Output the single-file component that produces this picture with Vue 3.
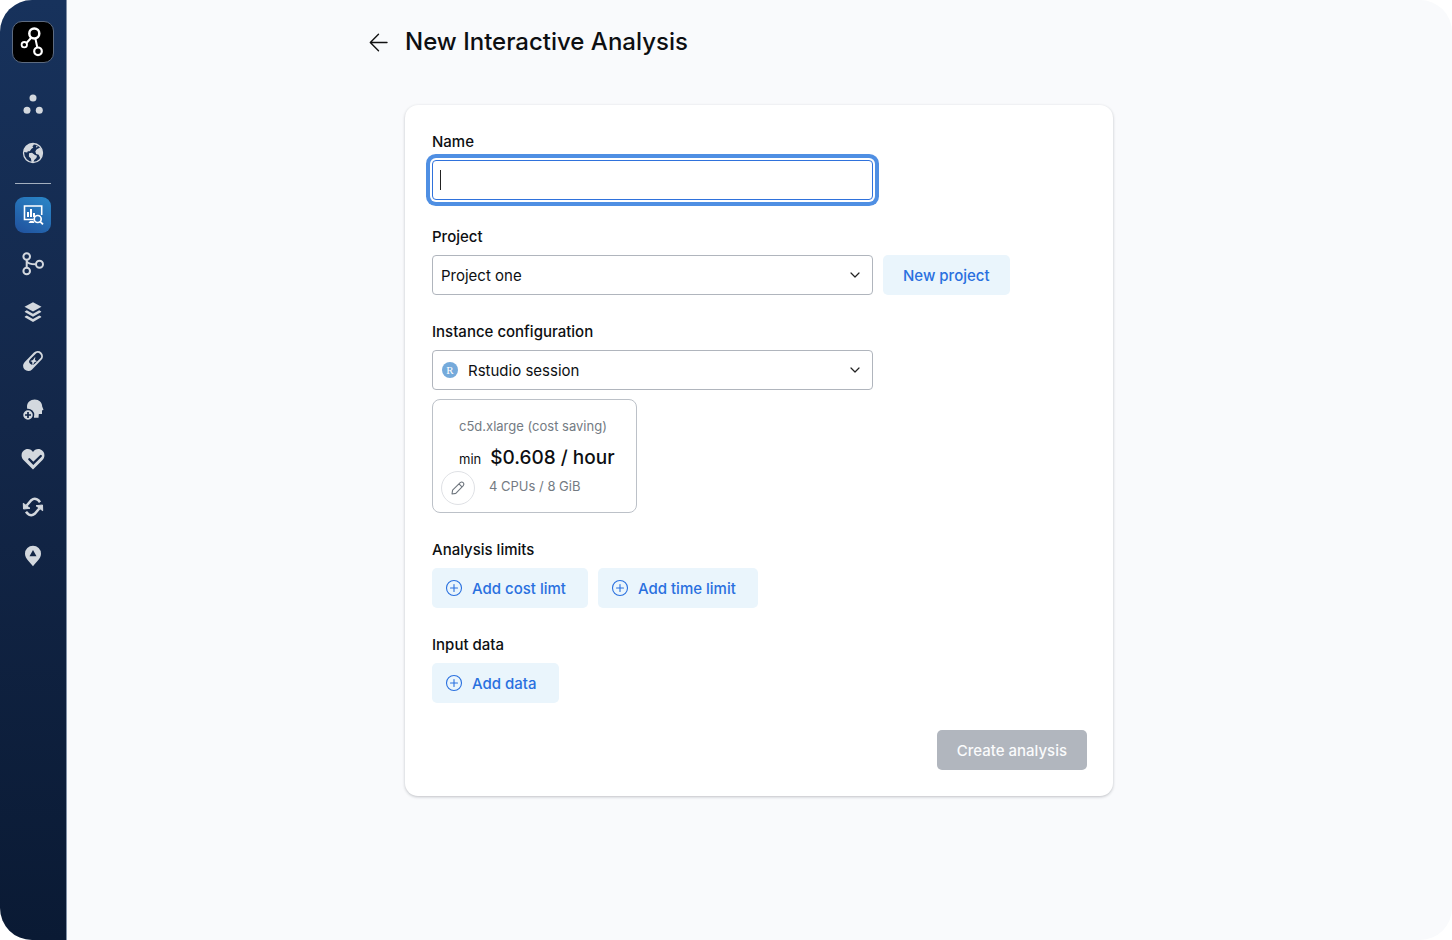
<script setup>
import { ref } from 'vue'

const name = ref('')
const project = ref('Project one')
const instance = ref('Rstudio session')
</script>

<template>
  <div class="app">
    <aside class="sidebar">
      <a class="logo" href="#" aria-label="Home">
        <svg width="40" height="40" viewBox="1 1 40 40" fill="none" stroke="#fff">
          <path d="M19 17 14.500 22M23.500 18 25.200 26" stroke-width="2" />
          <circle cx="22.300" cy="12.500" r="5" stroke-width="2.500" />
          <circle cx="12.300" cy="23.700" r="2.700" stroke-width="1.800" />
          <circle cx="26" cy="30.300" r="3.800" stroke-width="2.200" />
        </svg>
      </a>
      <nav class="nav" aria-label="Main">
        <a href="#" class="item" aria-label="Workspaces">
          <svg viewBox="0 0 24 24"><circle cx="12" cy="6" r="3.500" /><circle cx="6" cy="18.300" r="3.500" /><circle cx="18.300" cy="18.300" r="3.500" /></svg>
        </a>
        <a href="#" class="item" aria-label="Public data">
          <svg viewBox="0 0 24 24">
            <circle cx="12" cy="12" r="9.500" fill="none" stroke="currentColor" stroke-width="1.300" />
            <path d="M3 9C4 5 8 2.500 12 2.600l1 1.200-1.600 1.400.9 1.300-2 1.400-1.500 2.300-2 .1-.6 1.300L3 11z" />
            <path d="M8 12.300l3-.6 3 2.200 2 .8-.6 2.300-2.200 2-.8 2.600-1.700.2-.8-4.200-2-2z" />
            <path d="M15.500 8.500l3-1.800 2 1 1 3.300-.3 3.200-1.800 3.200-1.700-3.600-2.500-.7-.9-2.500zM15 4.500l1.800 1-1.300 1.200z" />
          </svg>
        </a>
      </nav>
      <hr class="divider" />
      <nav class="nav tools" aria-label="Tools">
        <a href="#" class="item active" aria-label="Interactive analysis" aria-current="page">
          <svg viewBox="0 0 24 24">
            <path d="M12.500 16.500H3.500V3H20.700v9" fill="none" stroke="currentColor" stroke-width="1.600" />
            <path d="M6 9h2v5H6zM9 6h2v8H9zM12 10h2v4h-2zM9 18h3.500l1 2H7.500z" />
            <circle cx="16.700" cy="16" r="3.500" fill="none" stroke="currentColor" stroke-width="1.700" />
            <path d="M19.200 18.600l2.800 2.800" stroke="currentColor" stroke-width="1.800" />
          </svg>
        </a>
        <a href="#" class="item" aria-label="Pipelines">
          <svg viewBox="0 0 24 24" class="line"><circle cx="5.700" cy="4.500" r="3.300" /><circle cx="5.700" cy="19" r="3.300" /><circle cx="18.500" cy="12.300" r="3.500" /><path d="M5.700 8v7.500M5.700 9c1 2.700 4 3.300 9 3.300" /></svg>
        </a>
        <a href="#" class="item" aria-label="Datasets">
          <svg viewBox="0 0 24 24"><path d="M12 2.200l8.500 4.600-8.500 4.700-8.500-4.700z" /><path d="M3.800 11.400l2-1.100 6.200 3.400 6.200-3.400 2 1.100v.7L12 16.800l-8.200-4.700zM3.800 16.600l2-1.100 6.200 3.400 6.200-3.400 2 1.100v.7L12 22l-8.200-4.700z" /></svg>
        </a>
        <a href="#" class="item" aria-label="Linked resources">
          <svg viewBox="0 0 24 24" stroke-linecap="round">
            <path d="M7.300 16.800l9.400-9.600" stroke="currentColor" stroke-width="10.500" />
            <path d="M11.500 12.500l5.300-5.300" stroke="#132749" stroke-width="6.500" />
            <path d="M14.300 7.800l-.3 3.200 2 1.300-2.600 1-1.900 3.400-.3-3.600-2-1.200 2.700-1z" />
          </svg>
        </a>
        <a href="#" class="item" aria-label="Cohorts">
          <svg viewBox="0 0 24 24">
            <path d="M13.700 1.500c4.400 0 7.500 3 7.500 7l1.300 3.200-1.500.8V16h-3.200l-.3 3.700H13l-.3-3.700C10.500 13 6 14 6 8.800c0-4.300 3.300-7.300 7.700-7.300z" />
            <circle cx="7" cy="17" r="5.500" stroke="#122648" stroke-width="1.500" />
            <path d="M7 14v6M4 17h6" stroke="#122648" stroke-width="1.700" />
          </svg>
        </a>
        <a href="#" class="item" aria-label="Health">
          <svg viewBox="0 0 24 24">
            <path d="M12 22.500 2.500 13C-1 9 .6 4 4.400 2.500 7.500 1.400 10.500 2.500 12 5c1.500-2.500 4.500-3.600 7.600-2.500C23.400 4 25 9 21.500 13z" />
            <path d="M8.300 12.300l4 4 7.500-7.300" fill="none" stroke="#112446" stroke-width="2.300" stroke-linecap="round" />
          </svg>
        </a>
        <a href="#" class="item" aria-label="Sync">
          <svg viewBox="0 0 24 24">
            <path d="M5.700 10.500l4.600-5.300q2.700-2.200 5.700-.8 1.800 1 3 2.800M18.300 13.500l-4.600 5.300q-2.700 2.200-5.700.8-1.800-1-3-2.800" fill="none" stroke="currentColor" stroke-width="2.500" />
            <path d="M2.300 8.300l6.700 5-6.500.7zM21.700 15.700l-6.700-5 6.500-.7z" stroke="currentColor" stroke-linejoin="round" />
          </svg>
        </a>
        <a href="#" class="item" aria-label="Locations">
          <svg viewBox="0 0 24 24"><path fill-rule="evenodd" d="M12 22.200C9 18 4 14.500 4 9.700a8 8 0 0 1 16 0c0 4.800-5 8.300-8 12.500zM12 6l-3.500 6.300h7z" /></svg>
        </a>
      </nav>
    </aside>

    <main class="main">
      <header class="heading">
        <a class="back" href="#" aria-label="Back">
          <svg width="20" height="20" viewBox="0 0 20 20" fill="none" stroke="#111" stroke-width="1.400" stroke-linecap="round" stroke-linejoin="round"><path d="M18 10.500H1.500M9.500 2.300 1.300 10.500l8.200 8.200" /></svg>
        </a>
        <h1>New Interactive Analysis</h1>
      </header>

      <form class="card" @submit.prevent>
        <div class="group">
          <label for="name">Name</label>
          <div class="control">
            <input id="name" v-model="name" class="field focused" type="text" autocomplete="off" />
            <span v-if="!name" class="caret"></span>
          </div>
        </div>

        <div class="group">
          <label for="project">Project</label>
          <div class="row">
            <div class="control">
              <select id="project" v-model="project" class="field"><option>Project one</option></select>
              <svg class="chevron" viewBox="0 0 12 12"><path d="M2 4l4 4 4-4" /></svg>
            </div>
            <button type="button" class="soft plain">New project</button>
          </div>
        </div>

        <div class="group">
          <label for="instance">Instance configuration</label>
          <div class="control">
            <span class="badge">R</span>
            <select id="instance" v-model="instance" class="field with-badge"><option>Rstudio session</option></select>
            <svg class="chevron" viewBox="0 0 12 12"><path d="M2 4l4 4 4-4" /></svg>
          </div>
          <section class="machine">
            <p class="type">c5d.xlarge (cost saving)</p>
            <p class="price"><span>min</span><strong>$0.608 / hour</strong></p>
            <div class="specs">
              <button type="button" class="edit" aria-label="Edit instance">
                <svg width="16" height="16" viewBox="0 0 16 16" fill="none" stroke="#6f767e" stroke-width="1.100" stroke-linejoin="round"><path d="M2 14l.6-3.800 7.600-7.600q1.600-1.200 3 .1t.1 3L5.800 13.400zM9 3.800l3.200 3.300" /></svg>
              </button>
              <p>4 CPUs / 8 GiB</p>
            </div>
          </section>
        </div>

        <div class="group" role="group" aria-labelledby="limits">
          <h2 id="limits">Analysis limits</h2>
          <div class="row">
            <button v-for="text in ['Add cost limt', 'Add time limit']" :key="text" type="button" class="soft">
              <svg class="plus" viewBox="0 0 18 18"><circle cx="9" cy="9" r="7.500" /><path d="M9 5.500v7M5.500 9h7" /></svg>
              {{ text }}
            </button>
          </div>
        </div>

        <div class="group" role="group" aria-labelledby="data">
          <h2 id="data">Input data</h2>
          <div class="row">
            <button type="button" class="soft">
              <svg class="plus" viewBox="0 0 18 18"><circle cx="9" cy="9" r="7.500" /><path d="M9 5.500v7M5.500 9h7" /></svg>
              Add data
            </button>
          </div>
        </div>

        <div class="actions">
          <button type="submit" class="create" disabled>Create analysis</button>
        </div>
      </form>
    </main>
  </div>
</template>

<style>
html, body { background: #fff; }
</style>

<style scoped>
.app, .app *, .app *::before { box-sizing: border-box; }
.app {
  display: flex;
  min-height: 100vh;
  overflow: hidden;
  border-radius: 32px;
  background: #f9fafc;
  color: #0d0f12;
  font-family: Inter, "Liberation Sans", sans-serif;
  font-size: 15px;
}
h1, h2, p { margin: 0; font-weight: 500; }
button, input, select { font: inherit; color: inherit; margin: 0; }
.sidebar {
  flex: none;
  width: 67px;
  padding-top: 21px;
  border-right: 1px solid #8190a6;
  background: linear-gradient(#17325c, #132749 45%, #0a1a34);
  display: flex;
  flex-direction: column;
  align-items: center;
}
.logo {
  display: block;
  width: 42px;
  height: 42px;
  margin-bottom: 23px;
  border: 1px solid #5d6b80;
  border-radius: 10px;
  background: #000;
}
.logo svg { display: block; }
.nav { display: flex; flex-direction: column; gap: 13px; }
.tools { height: 377px; gap: 0; justify-content: space-between; }
.item {
  display: flex;
  align-items: center;
  justify-content: center;
  width: 36px;
  height: 36px;
  border-radius: 9px;
  color: #d3d8de;
}
.item svg { width: 24px; height: 24px; fill: currentColor; }
.item svg.line { fill: none; stroke: currentColor; stroke-width: 2; }
.active { color: #fff; background: linear-gradient(30deg, #20509c, #2a88c9); }
.divider { width: 36px; height: 1px; margin: 12px 0 13px; border: 0; background: #a3afbf; }
.main {
  flex: 1;
  min-width: 0;
  display: grid;
  grid-template-columns: 36px minmax(0, 708px) 37px;
  align-content: start;
  justify-content: center;
  padding: 24px 0;
}
.heading { grid-column: 1 / 3; display: flex; align-items: center; height: 36px; }
.back { width: 36px; height: 20px; }
.back svg { display: block; }
h1 { font-size: 24px; line-height: 36px; }
.card {
  grid-column: 2;
  margin-top: 45px;
  padding: 25px 26px 26px 27px;
  border-radius: 13px;
  background: #fff;
  box-shadow: 0 1px 3px rgba(20, 25, 35, .25);
}
.group { margin-bottom: 25px; }
label, h2 {
  display: block;
  margin-bottom: 6px;
  font-size: 15px;
  font-weight: 500;
  line-height: 24px;
}
.row { display: flex; gap: 10px; }
.control { position: relative; flex: 0 1 441px; max-width: 441px; }
.field {
  display: block;
  width: 100%;
  height: 40px;
  padding: 0 8px;
  border: 1px solid #b0b5bd;
  border-radius: 4px;
  outline: none;
  background: #fff;
  appearance: none;
}
.focused {
  border-color: #2f72dc;
  caret-color: transparent;
  box-shadow: 0 0 0 2px #fff, 0 0 0 6px #4f8fe3;
}
.with-badge { padding-left: 35px; }
.caret { position: absolute; left: 8px; top: 10px; width: 1px; height: 20px; background: #222; }
.chevron {
  position: absolute;
  right: 12px;
  top: 14px;
  width: 12px;
  height: 12px;
  fill: none;
  stroke: #222;
  stroke-width: 1.2;
  stroke-linecap: round;
  stroke-linejoin: round;
  pointer-events: none;
}
.badge {
  position: absolute;
  left: 10px;
  top: 12px;
  width: 16px;
  height: 16px;
  border-radius: 50%;
  background: #75aadb;
  color: #fff;
  font: 11px/16px "Liberation Serif", serif;
  text-align: center;
}
.machine {
  width: 205px;
  margin-top: 9px;
  padding: 14px 8px 7px;
  border: 1px solid #bcc1c8;
  border-radius: 8px;
}
.type { padding-left: 18px; margin-bottom: 8px; font-size: 13px; font-weight: 400; line-height: 24px; color: #747b83; }
.price { display: flex; align-items: baseline; gap: 9px; padding-left: 18px; line-height: 24px; white-space: nowrap; }
.price span { font-size: 13px; font-weight: 400; }
.price strong { font-size: 19px; font-weight: 500; }
.specs { display: flex; gap: 14px; }
.specs p { font-size: 13px; font-weight: 400; line-height: 30px; color: #747b83; }
.edit {
  display: flex;
  align-items: center;
  justify-content: center;
  width: 34px;
  height: 34px;
  padding: 0;
  border: 1px solid #dfe1e5;
  border-radius: 50%;
  background: #fff;
}
.soft, .create {
  display: inline-flex;
  align-items: center;
  height: 40px;
  border: 0;
  border-radius: 5px;
  font-weight: 500;
  white-space: nowrap;
}
.soft { gap: 9px; padding: 0 22px 0 13px; background: #eaf5fc; color: #2970df; }
.plain { padding: 0 20px; }
.plus { width: 18px; height: 18px; fill: none; stroke: currentColor; stroke-width: 1.1; stroke-linecap: round; }
.actions { display: flex; justify-content: flex-end; margin-top: 27px; }
.create { padding: 0 20px; background: #b1b6be; color: #fafbfc; }
</style>
